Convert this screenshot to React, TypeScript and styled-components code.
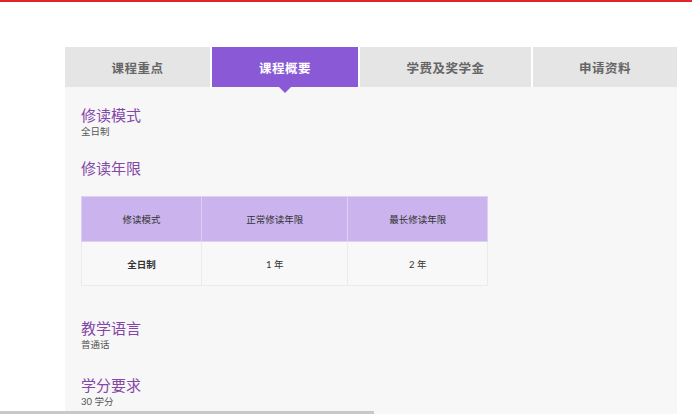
import React from "react";
import styled, { createGlobalStyle } from "styled-components";

const Global = createGlobalStyle`
  html, body { margin: 0; padding: 0; background: #fff; overflow: hidden; }
  body { font-family: "Lato", "Noto Sans CJK SC", sans-serif; width: 692px; height: 414px; }
`;

const TopBar = styled.div`
  height: 2px;
  background: #e2252b;
`;

const Panel = styled.div`
  margin: 45px 15px 0 65px;
  background: #f7f7f7;
  height: 367px;
  overflow: hidden;
`;

const Tabs = styled.div`
  display: grid;
  grid-template-columns: 145px 146px 171px 1fr;
  gap: 2px;
  height: 40px;
  background: #fff;
`;

const Tab = styled.div<{ $active?: boolean }>`
  position: relative;
  display: flex;
  align-items: center;
  justify-content: center;
  font-size: 12.5px;
  font-weight: 700;
  letter-spacing: 0.5px;
  color: ${({ $active }) => ($active ? "#fff" : "#666")};
  background: ${({ $active }) => ($active ? "#8a5ad6" : "#e5e5e5")};
  ${({ $active }) =>
    $active &&
    `&::after {
      content: "";
      position: absolute;
      left: 50%;
      bottom: -6px;
      margin-left: -6px;
      border-left: 6px solid transparent;
      border-right: 6px solid transparent;
      border-top: 6px solid #8a5ad6;
    }`}
`;

const Body = styled.div`
  padding: 18px 16px 0;
`;

const Section = styled.div<{ $gap?: number }>`
  margin-bottom: ${({ $gap }) => $gap ?? 20}px;
`;

const Heading = styled.div`
  font-size: 15px;
  color: #8447a8;
  line-height: 20px;
`;

const Sub = styled.div`
  font-size: 9.5px;
  color: #555;
  line-height: 14px;
`;

const Table = styled.table`
  margin-top: 18px;
  border-collapse: collapse;
  width: 407px;
  font-size: 9.5px;
  color: #333;
`;

const Th = styled.th<{ $w: number }>`
  width: ${({ $w }) => $w}px;
  height: 42px;
  background: #cbb4ee;
  font-weight: 400;
  border: 1px solid #ddd0f3;
`;

const Td = styled.td<{ $bold?: boolean }>`
  height: 41px;
  text-align: center;
  border: 1px solid #ebebeb;
  background: #f8f8f8;
  font-weight: ${({ $bold }) => ($bold ? 700 : 400)};
`;

const Scroll = styled.div`
  position: fixed;
  left: 0;
  bottom: 0;
  width: 374px;
  height: 3px;
  background: #c8c8c8;
`;

export default function App() {
  return (
    <>
      <Global />
      <TopBar />
      <Panel>
        <Tabs>
          <Tab>课程重点</Tab>
          <Tab $active>课程概要</Tab>
          <Tab>学费及奖学金</Tab>
          <Tab>申请资料</Tab>
        </Tabs>
        <Body>
          <Section $gap={19}>
            <Heading>修读模式</Heading>
            <Sub>全日制</Sub>
          </Section>
          <Section $gap={32}>
            <Heading>修读年限</Heading>
            <Table>
              <thead>
                <tr>
                  <Th $w={120}>修读模式</Th>
                  <Th $w={147}>正常修读年限</Th>
                  <Th $w={140}>最长修读年限</Th>
                </tr>
              </thead>
              <tbody>
                <tr>
                  <Td $bold>全日制</Td>
                  <Td>1 年</Td>
                  <Td>2 年</Td>
                </tr>
              </tbody>
            </Table>
          </Section>
          <Section $gap={23}>
            <Heading>教学语言</Heading>
            <Sub>普通话</Sub>
          </Section>
          <Section>
            <Heading>学分要求</Heading>
            <Sub>30 学分</Sub>
          </Section>
        </Body>
      </Panel>
      <Scroll />
    </>
  );
}
